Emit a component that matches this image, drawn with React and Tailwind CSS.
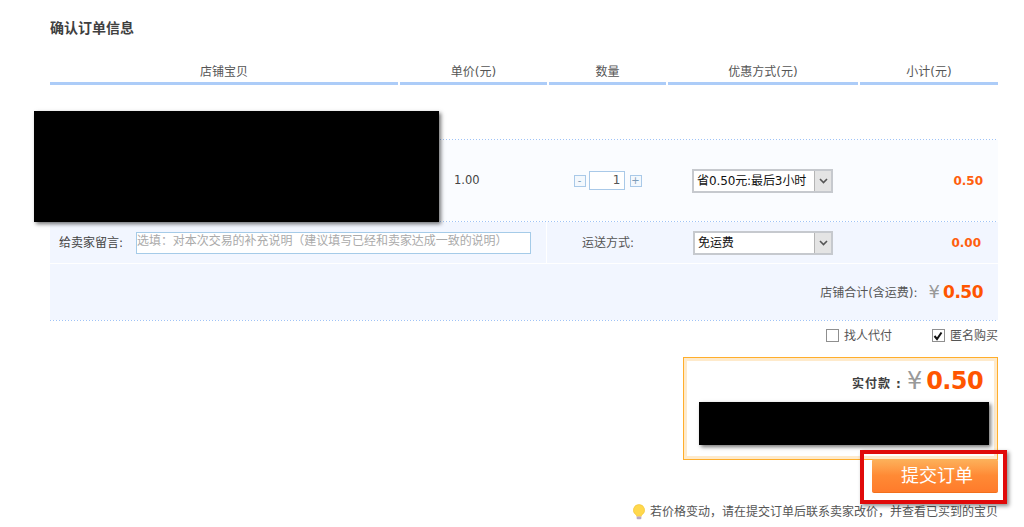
import React from "react";

const cjk = "font-['DejaVu_Sans','Noto_Sans_CJK_SC',sans-serif]";
const headers = ["店铺宝贝", "单价(元)", "数量", "优惠方式(元)", "小计(元)"];

const Arrow = () => (
  <div className="w-[17px] h-full flex items-center justify-center bg-[#e4e4e4] border-l border-[#b5b5b5]">
    <svg width="9" height="6" viewBox="0 0 9 6">
      <path d="M1 1l3.5 3.5L8 1" fill="none" stroke="#555" strokeWidth="1.6" />
    </svg>
  </div>
);

const Select = ({ label, className }) => (
  <div className={`h-[24px] flex items-center bg-white border-2 border-[#c6c9ce] ${className}`}>
    <span className="flex-1 pl-[3px] text-[12px] text-[#111] whitespace-nowrap tracking-[-0.1px]">{label}</span>
    <Arrow />
  </div>
);

const Step = ({ children }) => (
  <span className="w-[12px] h-[12px] flex items-center justify-center border border-[#a9c9e8] text-[10px] leading-none text-[#7d9cb8] bg-[#f3f8fd]">
    {children}
  </span>
);

// 点线分隔
const Dots = () => (
  <div className="h-[1px] bg-[repeating-linear-gradient(90deg,#9fc3f7_0,#9fc3f7_1px,transparent_1px,transparent_3px)]" />
);

const App = () => {
  return (
    <div className={`relative w-[1024px] h-[527px] overflow-hidden bg-white pl-[50px] pr-[26px] text-[12px] text-[#555] ${cjk}`}>
      <h1 className="pt-[20px] h-[36px] text-[14px] leading-[16px] font-bold text-[#404040]">确认订单信息</h1>

      {/* 表头 */}
      <div className="mt-[24px] mb-[54px] grid grid-cols-[348px_147px_117px_190px_138px] gap-x-[2px]">
        {headers.map((h) => (
          <div key={h} className="h-[25px] leading-[24px] text-center border-b-[3px] border-[#acccf8]">
            {h}
          </div>
        ))}
      </div>

      {/* 商品行 */}
      <Dots />
      <div className="h-[81px] grid grid-cols-[348px_147px_117px_190px_138px] gap-x-[2px] items-center bg-[#fafcff]">
        <div />
        <div className="pl-[54px] pt-[1px] text-[11.5px] text-[#444]">1.00</div>
        <div className="flex items-center justify-center gap-[3px]">
          <Step>-</Step>
          <div className="w-[36px] h-[19px] pr-[3px] text-right leading-[17px] bg-white border border-[#a9c9e8] text-[#555]">1</div>
          <span className="ml-[2px]">
            <Step>+</Step>
          </span>
        </div>
        <Select label="省0.50元:最后3小时" className="ml-[24px] w-[141px]" />
        <div className="pr-[15px] text-right text-[12px] font-bold text-[#ff5f0f]">0.50</div>
      </div>

      {/* 留言 / 运送方式 */}
      <Dots />
      <div className="h-[41px] flex items-center bg-[#f2f6ff]">
        <div className="w-[497px] h-full flex items-center pl-[9px] border-r border-white">
          <span className="w-[77px] text-[#444]">给卖家留言:</span>
          <input
            placeholder="选填：对本次交易的补充说明（建议填写已经和卖家达成一致的说明）"
            className="w-[395px] h-[22px] pb-[3px] text-[12px] tracking-[-0.05px] bg-white border border-[#a5cbe8] outline-none placeholder:text-[#aaa]"
          />
        </div>
        <span className="ml-[35px] w-[111px] whitespace-nowrap">运送方式:</span>
        <Select label="免运费" className="w-[140px]" />
        <div className="flex-1 pr-[17px] text-right font-bold text-[#ff5f0f]">0.00</div>
      </div>

      {/* 店铺合计 */}
      <div className="h-[57px] flex items-center justify-end pr-[15px] bg-[#f2f6ff] border-t border-white">
        <span className="mt-[2px]">店铺合计(含运费):</span>
        <span className="ml-[11px] text-[18px] leading-none text-[#999]">¥</span>
        <span className="ml-[3px] text-[17px] leading-none font-bold tracking-[-0.5px] text-[#ff5500]">0.50</span>
      </div>
      <Dots />

      {/* 代付 / 匿名 */}
      <div className="h-[29px] flex items-center justify-end">
        <span className="w-[13px] h-[13px] bg-white border border-[#8f8f8f]" />
        <span className="ml-[5px] text-[#555]">找人代付</span>
        <span className="ml-[40px] w-[13px] h-[13px] flex items-center justify-center bg-white border border-[#8f8f8f]">
          <svg width="10" height="10" viewBox="0 0 10 10">
            <path d="M1.5 5l2.5 3L8.5 1.5" fill="none" stroke="#111" strokeWidth="2" />
          </svg>
        </span>
        <span className="ml-[5px] text-[#555]">匿名购买</span>
      </div>

      {/* 实付款 */}
      <div className="mt-[7px] ml-auto w-[315px] h-[103px] border border-[#ffae2b] bg-white">
        <div className="h-full border-[3px] border-[#feeacb]">
          <div className="pt-[1px] pr-[11px] h-[38px] flex items-center justify-end">
            <span className="mt-[6px] font-bold text-[#404040] tracking-[1px]">实付款 :</span>
            <span className="ml-[5px] text-[24px] leading-none text-[#999]">¥</span>
            <span className="ml-[4px] text-[24px] leading-none font-bold tracking-[-0.6px] text-[#ff5500]">0.50</span>
          </div>
          <div className="mt-[3px] ml-[12px] w-[290px] h-[43px] bg-black shadow-[2px_2px_4px_rgba(0,0,0,0.55)]" />
        </div>
      </div>

      <div className="ml-auto w-[126px] h-[34px] -mt-[1px] pl-[4px] relative flex items-center justify-center rounded-[2px] bg-gradient-to-b from-[#fcb25b] via-[#ff8a35] to-[#ff7b2b] border-b border-[#f2701c] text-[18px] text-white">
        提交订单
      </div>

      {/* 提示 */}
      <div className="mt-[10px] flex items-center justify-end text-[#555]">
        <svg width="14" height="16" viewBox="0 0 14 16" className="mr-[4px]">
          <path d="M7 0.5a5.6 5.6 0 0 0-3.2 10.2c.6.5.8 1 .8 1.6h4.8c0-.6.2-1.1.8-1.6A5.6 5.6 0 0 0 7 0.5z" fill="#ffd84d" stroke="#f2c230" strokeWidth="0.6" />
          <rect x="4.6" y="12.6" width="4.8" height="2.6" rx="1" fill="#b9a9c4" />
        </svg>
        <span className="whitespace-nowrap">若价格变动，请在提交订单后联系卖家改价，并查看已买到的宝贝</span>
      </div>

      {/* 遮挡块和红框 */}
      <div className="absolute left-[34px] top-[111px] w-[405px] h-[111px] bg-black shadow-[2px_2px_4px_rgba(0,0,0,0.55)]" />
      <div className="absolute left-[860px] top-[450px] w-[147px] h-[54px] border-[4px] border-[#e00a0a] shadow-[2px_2px_4px_rgba(0,0,0,0.45)]" />
    </div>
  );
};

export default App;
